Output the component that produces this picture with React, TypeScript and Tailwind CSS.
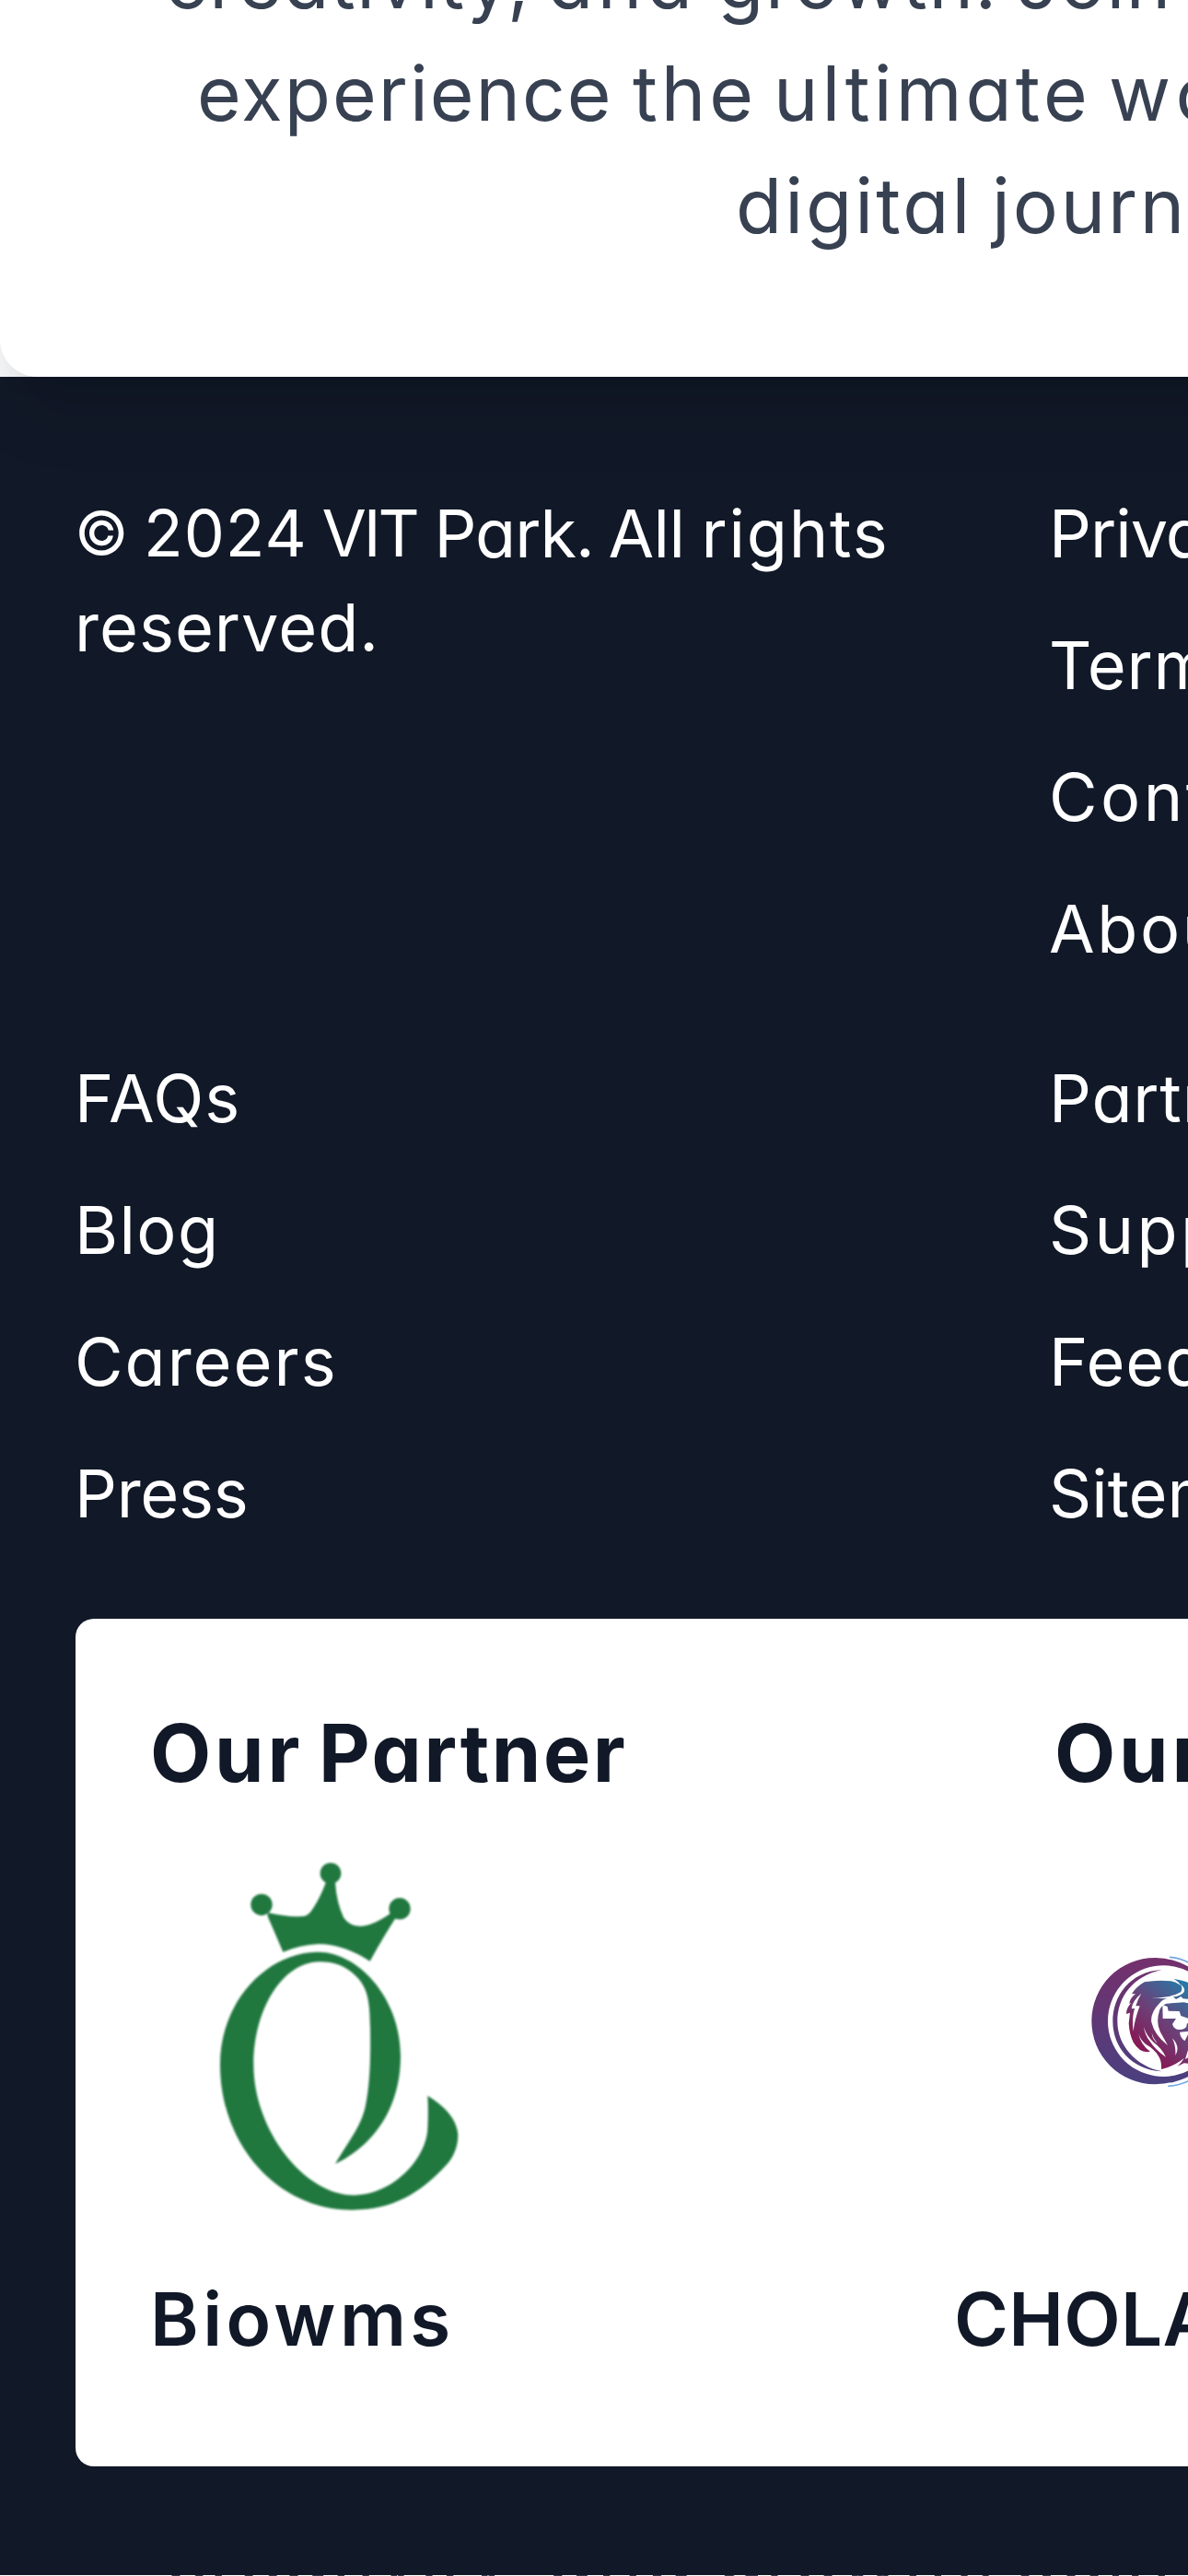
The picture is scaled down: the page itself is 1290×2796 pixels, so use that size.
function IntroFirstLine() {
  return (
    <p className="flex h-[122px] pl-[179px] whitespace-nowrap">
      <span className="w-[415px] shrink-0 tracking-[1.4px]">creativity,</span>
      <span className="w-[185px] shrink-0 tracking-[4.6px]">and</span>
      <span className="w-[324px] shrink-0 tracking-[1.6px]">growth.</span>
      <span className="shrink-0 tracking-[1.3px]">Join us</span>
    </p>
  );
}

function Intro() {
  return (
    <section className="relative z-10 h-[408.8px] w-[1800px] overflow-hidden rounded-bl-[41px] bg-white text-[82px] leading-[122px] text-[#374151]">
      <div className="-mt-[81px]">
        <IntroFirstLine />
        <p className="flex h-[122px] pl-[214px] whitespace-nowrap">
          <span className="w-[473px] shrink-0 tracking-[2px]">experience</span>
          <span className="w-[153px] shrink-0 tracking-[4px]">the</span>
          <span className="w-[364px] shrink-0 tracking-[4.1px]">ultimate</span>
          <span className="shrink-0 tracking-[7px]">world</span>
        </p>
        <p className="flex h-[122px] pl-[799px] whitespace-nowrap">
          <span className="w-[278px] shrink-0 tracking-[3px]">digital</span>
          <span className="shrink-0 tracking-[2.8px]">journey</span>
        </p>
      </div>
    </section>
  );
}

function CrownLogo() {
  return (
    <svg viewBox="0 0 900 1260" className="h-[420px] w-[300px] blur-[1.2px]" fill="#20783f">
      <circle cx="417" cy="100" r="34" />
      <circle cx="192" cy="202" r="35" />
      <circle cx="642" cy="215" r="35" />
      <path d="M212 228 Q275 243 325 240 Q345 240 360 214 Q385 175 402 128 L432 128 Q436 195 460 245 Q480 272 515 272 Q565 268 628 218 L632 240 Q590 305 545 386 Q460 331 378 330 Q315 334 262 356 Q238 300 212 240 Z" />
      <path
        d="M372 356 C500 352 645 500 645 695 C645 860 560 985 432 1046 C480 965 515 925 530 860 C545 790 548 700 546 600 C544 520 540 475 500 435 C465 400 425 387 378 388 C255 392 166 550 166 722 C166 940 335 1148 492 1148 C625 1146 730 1025 733 930 Q736 880 733 824 Q825 880 832 950 Q832 1010 790 1054 C710 1140 620 1196 488 1196 C245 1196 57 985 57 722 C57 520 205 360 372 356 Z"
      />
    </svg>
  );
}

function LionLogo() {
  return (
    <svg viewBox="0 0 630 660" className="h-[220px] w-[210px] shrink-0 blur-[0.5px]">
      <defs>
        <linearGradient id="ring" gradientUnits="userSpaceOnUse" x1="0" y1="135" x2="0" y2="547">
          <stop offset="0" stopColor="#74306c" />
          <stop offset="1" stopColor="#4a4080" />
        </linearGradient>
        <linearGradient id="mane" gradientUnits="userSpaceOnUse" x1="235" y1="430" x2="420" y2="225">
          <stop offset="0" stopColor="#8a124f" />
          <stop offset="0.5" stopColor="#6b4178" />
          <stop offset="1" stopColor="#257aa8" />
        </linearGradient>
      </defs>
      <path fill="none" stroke="#6fa5e3" strokeWidth="5" d="M360 133 Q395 134 435 157 M355 553 Q395 551 435 530" />
      <path fill="url(#ring)" d="M312 135 A206 206 0 1 0 312 547 Q375 547 435 515 L435 495 A181 181 0 1 1 435 187 L435 172 Q375 134 312 135 Z" />
      <path fill="url(#ring)" d="M335 174 C230 180 175 260 175 342 C175 425 235 500 335 505 C250 488 190 420 190 342 C190 264 240 194 335 174 Z" />
      <path
        fill="url(#mane)"
        d="M278 214 Q320 206 365 211 Q380 214 395 224 Q390 212 373 204 Q405 207 430 220 L430 480 L407 478 L386 488 Q400 476 407 462 Q375 488 333 498 Q335 470 322 452 Q310 432 282 416 Q262 399 258 378 Q266 420 297 440 Q265 448 242 410 Q229 385 227 348 L231 314 L219 318 Q219 296 236 281 L229 285 Q231 265 249 253 L237 252 Q252 229 278 214 Z"
      />
      <g fill="#fff">
        <path d="M268 251 Q238 276 236 301 L246 300 Q236 335 242 374 Q246 335 263 292 L250 292 Q256 270 268 251 Z" />
        <path d="M302 266 Q370 264 397 246 Q405 232 393 220 Q416 236 405 249 Q392 261 372 262 L381 270 L397 261 L404 268 L430 270 L430 285 L407 280 L350 284 Q332 290 327 307 Q315 345 329 375 L354 420 Q311 387 301 345 Q296 315 328 282 Q337 270 354 268 Z" />
        <path d="M337 288 L353 294 L356 308 L392 309 L397 324 L425 334 L425 344 L416 350 Q418 367 394 369 Q375 370 369 351 L381 333 L338 333 Z" />
        <path d="M393 377 L425 374 L410 405 Q395 397 393 377 Z" />
        <path d="M276 360 Q285 390 308 410 Q335 430 348 458 Q314 435 294 404 Q280 387 276 360 Z M302 378 Q305 396 321 413 Q303 402 302 378 Z M369 397 Q396 425 379 453 Q381 423 369 397 Z M425 420 Q417 445 411 465 L430 455 Z" />
      </g>
      <path fill="url(#mane)" d="M356 294 L386 296 L391 307 L363 306 Z" />
    </svg>
  );
}

function Partners() {
  return (
    <div className="mt-[85px] ml-[82px] h-[919.5px] w-[1640px] rounded-[20px] bg-white pt-[88.5px] pl-[81px] text-[#111827]">
      <div className="flex h-[114px] text-[86px] leading-[114px] font-bold whitespace-nowrap">
        <span className="w-[183px] shrink-0 tracking-[3.8px]">Our</span>
        <span className="w-[799px] shrink-0 tracking-[2.6px]">Partner</span>
        <span className="shrink-0 tracking-[3.8px]">Our</span>
      </div>
      <div className="flex h-[496.5px] pt-[40.5px] pl-[57px]">
        <div className="w-[930px] shrink-0">
          <CrownLogo />
        </div>
        <div className="pt-[80px]">
          <LionLogo />
        </div>
      </div>
      <div className="flex text-[80px] leading-[122px] font-semibold whitespace-nowrap">
        <span className="w-[873px] shrink-0 tracking-[4.4px]">Biowms</span>
        <span className="shrink-0 tracking-[0.3px]">CHOLA</span>
      </div>
    </div>
  );
}

function Footer() {
  return (
    <footer className="h-[2386.2px] w-[1800px] bg-[#111827] pt-[119.7px] text-[72px] leading-[102px] whitespace-nowrap text-white">
      <div className="grid grid-cols-[1058px_1fr] gap-y-[82px] pl-[81px]">
        <div>
          <p className="flex">
            <span className="w-[75px] shrink-0 text-[64px]">©</span>
            <span className="w-[193.5px] shrink-0 text-[70px] tracking-[1px]">2024</span>
            <span className="w-[122px] shrink-0 text-[70px] tracking-[-3px]">VIT</span>
            <span className="w-[189px] shrink-0 tracking-[-1px]">Park.</span>
            <span className="w-[101px] shrink-0 tracking-[-0.6px]">All</span>
            <span className="tracking-[1.8px]">rights</span>
          </p>
          <p className="tracking-[1px]">reserved.</p>
        </div>
        <ul className="flex flex-col gap-[41px]">
          <li className="tracking-[-1px]">Privacy Policy</li>
          <li className="tracking-[0.8px]">Terms of Service</li>
          <li className="tracking-[3.5px]">Contact Us</li>
          <li className="tracking-[2.6px]">About Us</li>
        </ul>
        <ul className="flex flex-col gap-[41px]">
          <li className="tracking-[1px]">FAQs</li>
          <li className="tracking-[1.4px]">Blog</li>
          <li className="tracking-[2px]">Careers</li>
          <li className="tracking-[-0.3px]">Press</li>
        </ul>
        <ul className="flex flex-col gap-[41px]">
          <li className="tracking-[0.8px]">Partners</li>
          <li className="tracking-[3.4px]">Support</li>
          <li className="tracking-[0.8px]">Feedback</li>
          <li>Sitemap</li>
        </ul>
      </div>
      <Partners />
    </footer>
  );
}

export default function App() {
  return (
    <div className="h-[2796px] w-[1290px] overflow-hidden bg-gray-50 font-['Inter',sans-serif] [font-feature-settings:'cv11']">
      <div className="relative z-10 w-[1800px] rounded-bl-[41px] shadow-[0_51px_77px_-15px_rgba(0,0,0,0.1),0_20px_31px_-20px_rgba(0,0,0,0.1)]">
        <Intro />
      </div>
      <Footer />
      <div className="h-px w-[1800px] overflow-hidden bg-white text-[82px] leading-[122px] text-[#374151]">
        <div className="-mt-[81px]">
          <IntroFirstLine />
        </div>
      </div>
    </div>
  );
}
